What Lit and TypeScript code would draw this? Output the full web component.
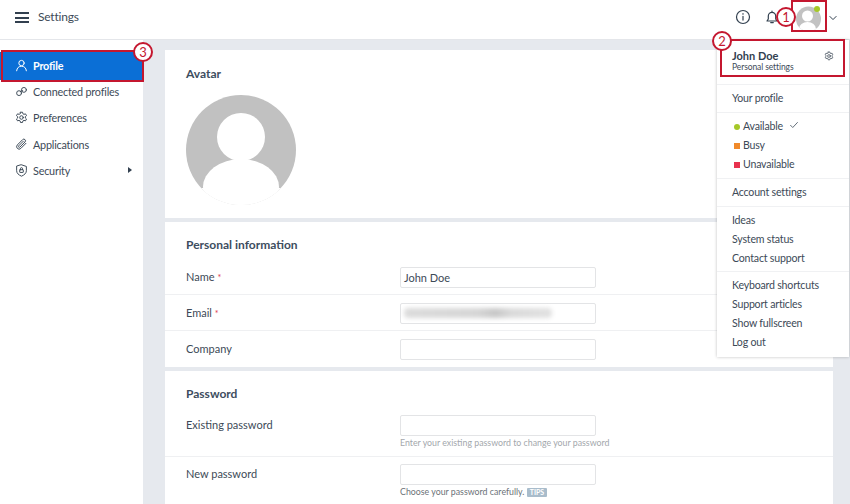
import { LitElement, html, css, svg } from "lit";
import { customElement } from "lit/decorators.js";

const ic = (body: unknown, cls = "nav-ic") => html`<svg class=${cls} viewBox="0 0 16 16" fill="none" stroke="currentColor" stroke-width="1.2" stroke-linecap="round" stroke-linejoin="round">${body}</svg>`;

const gear = svg`<path d="M6.7 1.5h2.6l.4 1.9 1.3.7 1.9-.6 1.3 2.2-1.5 1.3v1.6l1.500 1.300-1.300 2.200-1.900-.6-1.300.7-.4 1.900H6.700l-.4-1.900-1.300-.7-1.900.6-1.300-2.200 1.500-1.300V7L1.800 5.700l1.300-2.200 1.900.6 1.300-.7z"/><circle cx="8" cy="8" r="2.2"/>`;

@customElement("app-root")
export class AppRoot extends LitElement {
  static styles = css`
    :host { display: block; width: 850px; height: 504px; position: relative; overflow: hidden; background: #e6e9ee; font-family: "Lato", "Open Sans", sans-serif; color: #32404f; font-size: 12px; }
    svg { display: block; }
    .top { background: #fff; border-bottom: 1px solid #e4e6ea; display: flex; align-items: center; padding: 0 12px 6px 15px; box-sizing: border-box; height: 40px; }
    .burger { width: 14px; height: 11px; border-top: 2px solid #32404f; border-bottom: 2px solid #32404f; position: relative; box-sizing: border-box; margin-top: 2px; }
    .burger::after { content: ""; position: absolute; left: 0; right: 0; top: 2.5px; height: 2px; background: #32404f; }
    .title { font-size: 12px; letter-spacing: -.2px; margin: -1px 0 0 9px; color: #3d4a57; }
    .spacer { flex: 1; }
    .top-ic { width: 16px; height: 16px; color: #32404f; }
    .bell { margin-left: 13px; }
    .avatar-small { width: 27px; height: 27px; margin-left: 16px; margin-top: 5px; position: relative; }
    .avatar-small i { position: absolute; right: 3px; top: 0; width: 6px; height: 6px; border-radius: 50%; background: #a5c828; }
    .chev { width: 10px; height: 10px; margin-left: 5px; color: #32404f; margin-top: 2px; stroke-width: 1.6; }
    .body { display: flex; height: 464px; }
    .side { width: 143px; background: #fff; padding-top: 12px; box-sizing: border-box; flex: none; }
    .nav { height: 26.3px; display: flex; align-items: center; padding-left: 15px; font-size: 10.8px; letter-spacing: -.2px; color: #3d4a57; position: relative; }
    .nav.active { background: #0b6fd6; color: #fff; font-weight: 700; box-shadow: 0 2px 0 #0b6fd6; }
    .nav-ic { width: 13px; height: 13px; margin-right: 5px; flex: none; }
    .arrow { position: absolute; right: 11px; top: 10px; border-left: 4px solid #32404f; border-top: 3px solid transparent; border-bottom: 3px solid transparent; }
    .main { flex: 1; padding: 10px 17px 0 22px; display: flex; flex-direction: column; gap: 4px; min-width: 0; }
    .card { background: #fff; flex: none; }
    .avatar-card { height: 168px; padding: 17px 21px 0; box-sizing: border-box; }
    h2 { margin: 0; font-size: 12px; font-weight: 700; color: #3d4d5e; line-height: 14px; }
    .big-avatar { width: 110px; height: 110px; margin-top: 14px; }
    .sec { padding-top: 16px; box-sizing: border-box; }
    .sec.personal { height: 145px; }
    .sec.password { flex: 1; }
    .sec h2 { padding-left: 21px; }
    .sec .rows { margin-top: 7px; }
    .row { display: flex; height: 36px; padding-left: 21px; border-bottom: 1px solid #eff0f2; box-sizing: border-box; align-items: flex-start; padding-top: 8px; }
    .row:last-child { border-bottom: none; }
    .row.tall { height: 49px; padding-top: 7px; }
    .lab { width: 214px; flex: none; font-size: 11px; line-height: 20px; color: #3d4a57; }
    .req { color: #e0394d; font-size: 9px; }
    .fld { width: 196px; }
    .inp { width: 196px; height: 21px; border: 1px solid #e3e4e6; border-radius: 2px; box-sizing: border-box; font-size: 11px; line-height: 19px; padding-left: 3px; color: #3d4a57; position: relative; background: #fff; }
    .blur { position: absolute; left: 3px; top: 4px; width: 148px; height: 10px; border-radius: 4px; background: linear-gradient(90deg, #dcdcdc, #d6d6d6 50%, #c8c8c8 62%, #dadada 72%, #e2e2e2); filter: blur(2px); }
    .hint { font-size: 8.8px; line-height: 12px; color: #a3a7ac; margin-top: 1px; white-space: nowrap; }
    .hint.dark { color: #6c7278; }
    .tips { display: inline-block; background: #a9bccb; color: #fff; font-size: 7px; font-weight: 700; padding: 0 3px; line-height: 9px; border-radius: 1px; vertical-align: 0; }

    .menu { position: absolute; left: 717px; top: 40px; width: 132px; height: 317px; background: #fff; box-sizing: border-box; box-shadow: 0 0 3px rgba(0,0,0,.25); font-size: 10.6px; letter-spacing: -.2px; color: #3d4a57; }
    .m-head { height: 44px; padding: 9px 15px 0; box-sizing: border-box; position: relative; letter-spacing: 0; }
    .m-name { font-weight: 700; font-size: 11px; line-height: 13px; color: #32404f; }
    .m-sub { font-size: 8.5px; letter-spacing: -.1px; line-height: 10px; }
    .m-gear { position: absolute; right: 15px; top: 11px; width: 10px; height: 10px; color: #3d4a57; }
    .grp { border-top: 1px solid #f0f1f3; padding: 4px 0; }
    .grp.tight { padding-bottom: 3px; }
    .it { height: 19px; line-height: 19px; padding-left: 15px; display: flex; align-items: center; }
    .dot { width: 6px; height: 6px; margin-left: 2px; margin-right: 3px; flex: none; }
    .dot.g { background: #a5c828; border-radius: 50%; }
    .dot.o { background: #f18a2b; }
    .dot.r { background: #e8324e; }
    .check { width: 10px; height: 10px; margin-left: 6px; margin-top: -3px; color: #32404f; }

    .red { position: absolute; border: 2px solid #c4172f; box-sizing: border-box; pointer-events: none; }
    .r3 { left: 1px; top: 50px; width: 143px; height: 32px; }
    .r2 { left: 720px; top: 39px; width: 125px; height: 38px; }
    .r1 { left: 791px; top: 0; width: 36px; height: 32px; }
    .num { position: absolute; width: 20px; height: 20px; border-radius: 50%; border: 2px solid #c4172f; background: #fff; color: #c4172f; box-sizing: border-box; font-size: 13px; font-weight: 400; text-align: center; line-height: 16px; }
    .n1 { left: 776px; top: 7px; }
    .n2 { left: 712px; top: 31px; }
    .n3 { left: 133px; top: 42px; }
  `;

  render() {
    return html`
      <div class="top">
        <div class="burger"></div>
        <div class="title">Settings</div>
        <div class="spacer"></div>
        ${ic(svg`<circle cx="8" cy="8" r="6.5"/><path d="M8 7.300v3.800M8 4.600v.6"/>`, "top-ic")}
        ${ic(svg`<path d="M3 12h10l-1.300-2V7a3.700 3.700 0 0 0-7.400 0v3zM6.700 13.600h2.600M8 2v1.200"/>`, "top-ic bell")}
        <div class="avatar-small">
          <svg viewBox="0 0 27 27" width="27" height="27"><defs><clipPath id="c1"><circle cx="12.500" cy="13" r="12.500"/></clipPath></defs><circle cx="12.500" cy="13" r="12.500" fill="#c2c2c2"/><g clip-path="url(#c1)" fill="#fff"><circle cx="11.500" cy="10" r="5.500"/><ellipse cx="11.500" cy="23" rx="8.500" ry="7"/></g></svg>
          <i></i>
        </div>
        ${ic(svg`<path d="M3 5.500l5 5 5-5"/>`, "chev")}
      </div>
      <div class="body">
        <div class="side">
          <div class="nav active">${ic(svg`<circle cx="8" cy="5" r="3.300"/><path d="M2 14.500c.4-3.600 2.600-5.600 6-5.600s5.600 2 6 5.600"/>`)}Profile</div>
          <div class="nav">${ic(svg`<circle cx="5" cy="10" r="3"/><circle cx="11" cy="6" r="3"/><path d="M6.500 8l3-1"/>`)}Connected profiles</div>
          <div class="nav">${ic(gear)}Preferences</div>
          <div class="nav">${ic(svg`<path d="M13.500 6.500l-6.300 6.300a3 3 0 0 1-4.300-4.300l6.500-6.500a2 2 0 0 1 2.900 2.900l-6.300 6.300a1 1 0 0 1-1.500-1.500l5.800-5.800"/>`)}Applications</div>
          <div class="nav">${ic(svg`<path d="M8 1l6 2v5.300c0 3-2.500 5.200-6 6.700-3.500-1.500-6-3.700-6-6.700V3z"/><rect x="5.800" y="7" width="4.400" height="3.400" rx=".5"/><path d="M6.700 7V5.800a1.300 1.300 0 0 1 2.600 0V7"/>`)}Security<span class="arrow"></span></div>
        </div>
        <div class="main">
          <div class="card avatar-card">
            <h2>Avatar</h2>
            <svg class="big-avatar" viewBox="0 0 110 110"><defs><clipPath id="c2"><circle cx="55" cy="55" r="55"/></clipPath></defs><circle cx="55" cy="55" r="55" fill="#c1c1c1"/><g clip-path="url(#c2)" fill="#fff"><circle cx="55" cy="42" r="24"/><ellipse cx="55" cy="92" rx="38" ry="28"/><rect x="0" y="93" width="110" height="17"/></g></svg>
          </div>
          <div class="card sec personal">
            <h2>Personal information</h2>
            <div class="rows">
              <div class="row"><div class="lab">Name <span class="req">*</span></div><div class="inp">John Doe</div></div>
              <div class="row"><div class="lab">Email <span class="req">*</span></div><div class="inp"><div class="blur"></div></div></div>
              <div class="row"><div class="lab">Company</div><div class="inp"></div></div>
            </div>
          </div>
          <div class="card sec password">
            <h2>Password</h2>
            <div class="rows">
              <div class="row tall"><div class="lab">Existing password</div><div class="fld"><div class="inp"></div><div class="hint">Enter your existing password to change your password</div></div></div>
              <div class="row tall"><div class="lab">New password</div><div class="fld"><div class="inp"></div><div class="hint dark">Choose your password carefully. <span class="tips">TIPS</span></div></div></div>
            </div>
          </div>
        </div>
      </div>

      <div class="menu">
        <div class="m-head">
          <div class="m-name">John Doe</div>
          <div class="m-sub">Personal settings</div>
          ${ic(gear, "m-gear")}
        </div>
        <div class="grp"><div class="it">Your profile</div></div>
        <div class="grp">
          <div class="it"><span class="dot g"></span>Available${ic(svg`<path d="M2.500 8.500l3.500 3.500 7.500-8" />`, "check")}</div>
          <div class="it"><span class="dot o"></span>Busy</div>
          <div class="it"><span class="dot r"></span>Unavailable</div>
        </div>
        <div class="grp"><div class="it">Account settings</div></div>
        <div class="grp tight"><div class="it">Ideas</div><div class="it">System status</div><div class="it">Contact support</div></div>
        <div class="grp"><div class="it">Keyboard shortcuts</div><div class="it">Support articles</div><div class="it">Show fullscreen</div><div class="it">Log out</div></div>
      </div>

      <div class="red r3"></div>
      <div class="red r2"></div>
      <div class="red r1"></div>
      <div class="num n1">1</div>
      <div class="num n2">2</div>
      <div class="num n3">3</div>
    `;
  }
}
